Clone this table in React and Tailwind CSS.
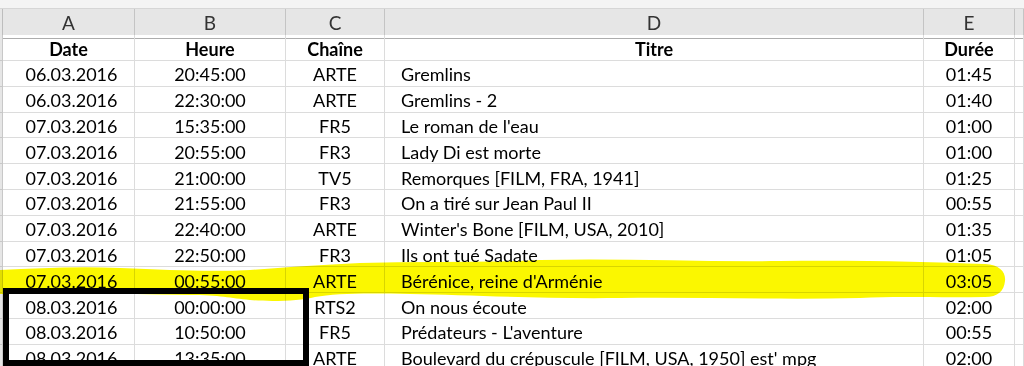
import React from "react";

const rows = [
  ["06.03.2016", "20:45:00", "ARTE", "Gremlins", "01:45"],
  ["06.03.2016", "22:30:00", "ARTE", "Gremlins - 2", "01:40"],
  ["07.03.2016", "15:35:00", "FR5", "Le roman de l'eau", "01:00"],
  ["07.03.2016", "20:55:00", "FR3", "Lady Di est morte", "01:00"],
  ["07.03.2016", "21:00:00", "TV5", "Remorques [FILM, FRA, 1941]", "01:25"],
  ["07.03.2016", "21:55:00", "FR3", "On a tiré sur Jean Paul II", "00:55"],
  ["07.03.2016", "22:40:00", "ARTE", "Winter's Bone [FILM, USA, 2010]", "01:35"],
  ["07.03.2016", "22:50:00", "FR3", "Ils ont tué Sadate", "01:05"],
  ["07.03.2016", "00:55:00", "ARTE", "Bérénice, reine d'Arménie", "03:05"],
  ["08.03.2016", "00:00:00", "RTS2", "On nous écoute", "02:00"],
  ["08.03.2016", "10:50:00", "FR5", "Prédateurs - L'aventure", "00:55"],
  ["08.03.2016", "13:35:00", "ARTE", "Boulevard du crépuscule [FILM, USA, 1950] est' mpg", "02:00"],
];

const gridCols = "grid grid-cols-[3px_132px_151px_99px_539px_91px_9px]";
const cell = "border-r border-b border-[#dcdcdc] flex items-center pt-[3px] overflow-hidden whitespace-nowrap";

function Row({ data, bold, h }) {
  return (
    <div className={`${gridCols} ${h}`}>
      <div className="bg-[#e6e6e6] border-r border-b border-[#c8c8c8]" />
      <div className={`${cell} justify-center ${bold ? "" : "pl-[6px]"}`}>{data[0]}</div>
      <div className={`${cell} justify-center`}>{data[1]}</div>
      <div className={`${cell} justify-center`}>{data[2]}</div>
      <div className={`${cell} ${bold ? "justify-center" : "justify-start pl-[16px]"}`}>{data[3]}</div>
      <div className={`${cell} justify-center`}>{data[4]}</div>
      <div className={cell} />
    </div>
  );
}

export default function App() {
  return (
    <div
      className="relative w-[1024px] h-[366px] overflow-hidden bg-white text-[18px] text-black"
      style={{ fontFamily: "Lato, 'Liberation Sans', sans-serif" }}
    >
      <div className="h-[9px] bg-[#f4f4f4] border-b border-[#d6d6d6]" />
      <div className={`${gridCols} h-[26px] bg-[#e6e6e6] text-[#333] text-[19px]`}>
        <div className="border-r border-b border-[#bdbdbd]" />
        {["A", "B", "C", "D", "E", ""].map((l, i) => (
          <div key={i} className="flex items-center justify-center border-r border-b border-[#c4c4c4] border-b-[#adadad]">
            {l}
          </div>
        ))}
      </div>
      <div className="font-bold">
        <Row data={["Date", "Heure", "Chaîne", "Titre", "Durée"]} bold h="h-[26px]" />
      </div>
      {rows.map((r, i) => (
        <Row key={i} data={r} h="h-[25.8px]" />
      ))}

      <svg className="absolute left-0 top-0 mix-blend-multiply pointer-events-none" width="1024" height="366" viewBox="0 0 1024 366">
        <path
          fill="#fbf700"
          d="M0,270 C40,268 80,266 120,268 C170,270 210,272 250,270 C290,267 320,265 360,263 C420,261 480,263 540,260 C620,258 700,262 780,261 C860,260 930,262 985,264 C1000,265 1006,272 1005,281 C1004,291 998,297 985,297 C940,298 900,296 860,298 C780,300 700,297 620,298 C540,299 470,295 410,294 C370,293 335,293 315,297 C300,301 270,302 250,300 C230,298 220,295 190,295 C140,295 90,292 40,293 C25,293 10,294 0,294 Z"
        />
      </svg>

      <div className="absolute left-[3px] top-[288px] w-[306px] h-[78px] border-[6px] border-black" />
    </div>
  );
}
